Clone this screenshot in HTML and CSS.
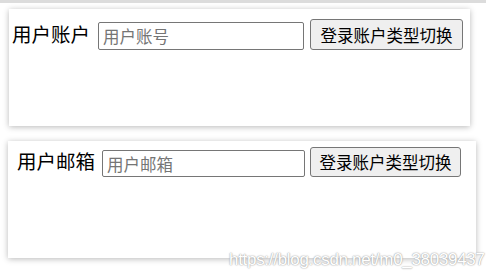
FILE: index.html
```html
<!DOCTYPE html>
<html lang="zh-CN">
<head>
    <meta charset="UTF-8">
    <title>登录账户类型切换</title>
    <link rel="stylesheet" href="styles.css">
</head>
<body>
    <div class="top-bar"></div>

    <div class="card card-account">
        <label class="field-label" for="account">用户账户</label>
        <input class="field-input" id="account" type="text" placeholder="用户账号">
        <button class="switch-btn">登录账户类型切换</button>
    </div>

    <div class="card card-email">
        <label class="field-label" for="email">用户邮箱</label>
        <input class="field-input" id="email" type="text" placeholder="用户邮箱">
        <button class="switch-btn">登录账户类型切换</button>
    </div>

    <span class="watermark">https://blog.csdn.net/m0_38039437</span>
</body>
</html>
```

FILE: styles.css
```css
body {
    margin: 0;
    padding: 0;
    width: 486px;
    height: 276px;
    position: relative;
    overflow: hidden;
    background-color: #ffffff;
    font-family: "Noto Sans CJK SC", "Microsoft YaHei", sans-serif;
    color: #000000;
}

.top-bar {
    height: 3px;
    background-color: #dcdcdc;
}

.card {
    display: flex;
    align-items: flex-start;
    box-sizing: border-box;
    height: 117px;
    background-color: #ffffff;
    box-shadow: 0 1px 6px rgba(0, 0, 0, 0.28);
}

.card-account {
    width: 461px;
    margin: 6px 0 0 9px;
    padding: 10px 0 0 3px;
}

.card-email {
    width: 468px;
    margin: 15px 0 0 8px;
    padding: 6px 0 0 9px;
}

.field-label {
    width: 78px;
    font-size: 19.5px;
    line-height: 26px;
    white-space: nowrap;
    margin-top: 2px;
}

.card-email .field-label {
    margin-top: 1px;
}

.field-input {
    box-sizing: border-box;
    height: 28px;
    width: 206px;
    margin: 3px 6px 0 8px;
    padding: 0 4px;
    border: 1px solid #767676;
    border-radius: 2px;
    font-family: "Noto Sans CJK SC", "Microsoft YaHei", sans-serif;
    font-size: 16.5px;
}

.card-email .field-input {
    width: 203px;
    height: 27px;
    margin: 3px 5px 0 7px;
}

.field-input::placeholder {
    color: #757575;
}

.switch-btn {
    box-sizing: border-box;
    height: 31px;
    width: 153px;
    padding: 0;
    border: 1px solid #767676;
    border-radius: 3px;
    background-color: #efefef;
    font-family: "Noto Sans CJK SC", "Microsoft YaHei", sans-serif;
    font-size: 16.5px;
    color: #000000;
}

.card-email .switch-btn {
    width: 151px;
    height: 30px;
}

.watermark {
    position: absolute;
    left: 229px;
    top: 250px;
    font-family: "Liberation Sans", Arial, sans-serif;
    font-size: 17px;
    color: #ffffff;
    letter-spacing: -0.3px;
    text-shadow: 0 0 1px #9a9a9a, 0 0 2px #b0b0b0;
}
```
